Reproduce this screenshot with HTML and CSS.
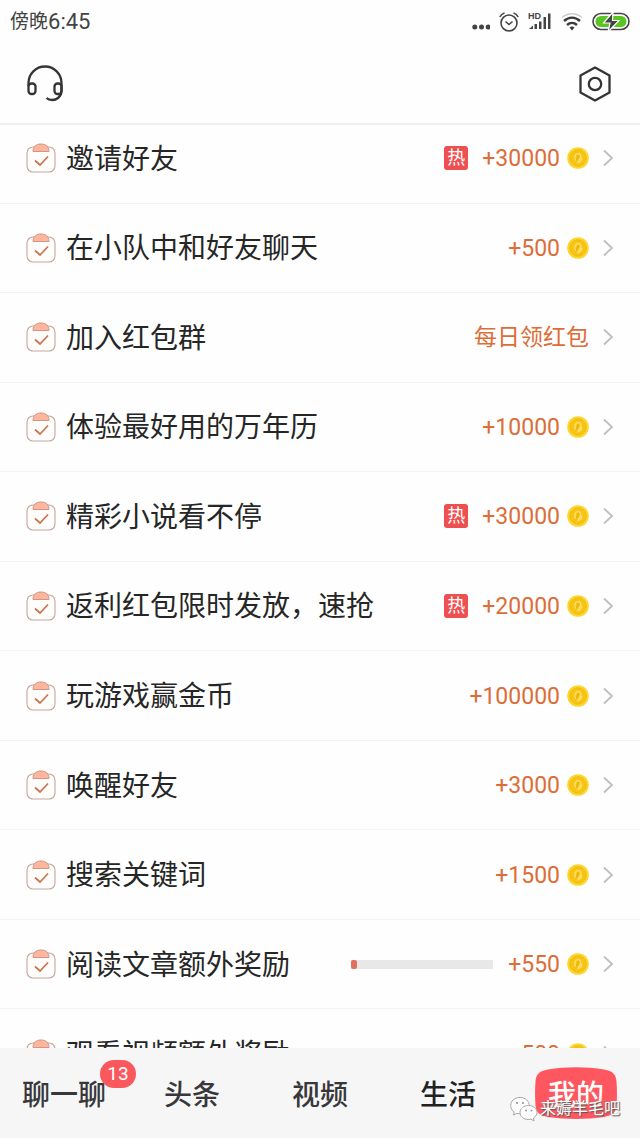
FILE: index.html
```html
<!DOCTYPE html>
<html lang="zh-CN">
<head>
<meta charset="utf-8">
<meta name="viewport" content="width=device-width, initial-scale=1">
<title>我的</title>
<link rel="stylesheet" href="styles.css">
</head>
<body>
<svg class="defs" aria-hidden="true">
  <symbol id="task" viewBox="0 0 30 30">
    <rect x="1" y="4" width="28" height="25" rx="6" fill="#fffdfb" stroke="#c3a79d" stroke-width="1.1"/>
    <path d="M7 8.500C7 3.500 10 1 15 1s8 2.500 8 7.500z" fill="#ffb69e" stroke="#cf9784" stroke-width="1"/>
    <path d="M9 17.500l5 4.500 8-8.500" fill="none" stroke="#c9744d" stroke-width="1.700"/>
  </symbol>
  <symbol id="coin" viewBox="0 0 22 22">
    <circle cx="11" cy="11" r="10.800" fill="#fbd72e"/>
    <circle cx="11" cy="11" r="8.200" fill="#f8c414" stroke="#f3b913" stroke-width="1"/>
    <path d="M8.500 13.500c-1.500-3-.500-6 2-6.800 2.800-.600 4 1.600 3 3.800l-2.500 5c2.500-.500 3.800-2.500 3.500-5" fill="none" stroke="#fce06a" stroke-width="1.400"/>
    <path d="M9.500 13l2-4.500" stroke="#eba915" stroke-width="1.200"/>
  </symbol>
  <symbol id="arrow" viewBox="0 0 12 18">
    <path d="M2 1.500l8 7.500-8 7.500" fill="none" stroke="#bebebe" stroke-width="1.800"/>
  </symbol>
</svg>
<div class="app">
  <header class="top">
    <div class="status">
      <div class="clock"><span class="period">傍晚</span><span>6:45</span></div>
      <div class="signals">
        <svg width="20" height="22" viewBox="0 0 20 22" fill="#444"><circle cx="4.800" cy="16" r="2.500"/><circle cx="11.500" cy="16" r="2.500"/><circle cx="18.200" cy="16" r="2.500"/></svg>
        <svg width="20" height="22" viewBox="0 0 20 22" fill="none" stroke="#444" stroke-width="1.600"><circle cx="10" cy="12" r="8"/><path d="M6.500 10.500l3.500 3 3.500-3M.800 6C1.800 4 3.500 2.600 5.500 2M19.200 6c-1-2-2.700-3.400-4.700-4"/></svg>
        <svg width="24" height="22" viewBox="0 0 24 22" fill="#444"><text class="hd" x="0" y="8">HD</text><path d="M1 18l4-3.500V18zM6.500 13H9v5H6.500zM11 10.500h2.500V18H11zM15.500 6H18v12h-2.500zM20 2.500h2.500V18H20z"/></svg>
        <svg width="22" height="22" viewBox="0 0 22 22" fill="none" stroke-width="2.400"><path d="M1 6.500c6-5 14-5 20 0" stroke="#ccc" stroke-width="1.600"/><path d="M3 10c5-4.500 11-4.500 16 0M6 14c3-2.800 7-2.800 10 0" stroke="#3c3c3c"/><path d="M8.500 16.500c1.500-1.300 3.500-1.300 5 0L11 19.500z" fill="#3c3c3c"/></svg>
        <svg width="38" height="22" viewBox="0 0 38 22"><rect x="1" y="2.500" width="36" height="16" rx="8" fill="#fff" stroke="#444" stroke-width="1.600"/><rect x="3.500" y="5" width="31" height="11" rx="5.500" fill="#58c522"/><path d="M21 1L11.500 12H18l-2 9L27 9.500h-6.500z" fill="#444" stroke="#fff" stroke-width="1.200"/></svg>
      </div>
    </div>
    <div class="tools">
      <button class="tool" aria-label="客服"><svg width="38" height="38" viewBox="0 0 38 38" fill="none" stroke="#343434" stroke-width="2.300"><path d="M2.500 21v-3a16.500 16.500 0 0 1 33 0v8c0 6-5.500 9-9 9-2.500 0-4.500-.500-6-2"/><rect x="2.500" y="18.500" width="7" height="10.500" rx="3"/><rect x="28.500" y="18.500" width="7" height="10.500" rx="3"/></svg></button>
      <button class="tool" aria-label="设置"><svg width="38" height="38" viewBox="0 0 38 38" fill="none" stroke="#343434" stroke-width="2.300" stroke-linejoin="round"><path d="M19 2.500l14.500 8v17L19 35.500l-14.500-8v-17z"/><circle cx="19" cy="19" r="6.200"/></svg></button>
    </div>
  </header>
  <main class="scroll">
    <ul class="tasks">
      <li><a class="task" href="#"><svg class="mark"><use href="#task"/></svg><span class="name">邀请好友</span><span class="hot">热</span><span class="prize">+30000</span><svg class="coin"><use href="#coin"/></svg><svg class="arrow"><use href="#arrow"/></svg></a></li>
      <li><a class="task" href="#"><svg class="mark"><use href="#task"/></svg><span class="name">在小队中和好友聊天</span><span class="prize">+500</span><svg class="coin"><use href="#coin"/></svg><svg class="arrow"><use href="#arrow"/></svg></a></li>
      <li><a class="task" href="#"><svg class="mark"><use href="#task"/></svg><span class="name">加入红包群</span><span class="prize">每日领红包</span><svg class="arrow"><use href="#arrow"/></svg></a></li>
      <li><a class="task" href="#"><svg class="mark"><use href="#task"/></svg><span class="name">体验最好用的万年历</span><span class="prize">+10000</span><svg class="coin"><use href="#coin"/></svg><svg class="arrow"><use href="#arrow"/></svg></a></li>
      <li><a class="task" href="#"><svg class="mark"><use href="#task"/></svg><span class="name">精彩小说看不停</span><span class="hot">热</span><span class="prize">+30000</span><svg class="coin"><use href="#coin"/></svg><svg class="arrow"><use href="#arrow"/></svg></a></li>
      <li><a class="task" href="#"><svg class="mark"><use href="#task"/></svg><span class="name">返利红包限时发放，速抢</span><span class="hot">热</span><span class="prize">+20000</span><svg class="coin"><use href="#coin"/></svg><svg class="arrow"><use href="#arrow"/></svg></a></li>
      <li><a class="task" href="#"><svg class="mark"><use href="#task"/></svg><span class="name">玩游戏赢金币</span><span class="prize">+100000</span><svg class="coin"><use href="#coin"/></svg><svg class="arrow"><use href="#arrow"/></svg></a></li>
      <li><a class="task" href="#"><svg class="mark"><use href="#task"/></svg><span class="name">唤醒好友</span><span class="prize">+3000</span><svg class="coin"><use href="#coin"/></svg><svg class="arrow"><use href="#arrow"/></svg></a></li>
      <li><a class="task" href="#"><svg class="mark"><use href="#task"/></svg><span class="name">搜索关键词</span><span class="prize">+1500</span><svg class="coin"><use href="#coin"/></svg><svg class="arrow"><use href="#arrow"/></svg></a></li>
      <li><a class="task" href="#"><svg class="mark"><use href="#task"/></svg><span class="name">阅读文章额外奖励</span><span class="bar"><span class="fill" style="width:4%"></span></span><span class="prize">+550</span><svg class="coin"><use href="#coin"/></svg><svg class="arrow"><use href="#arrow"/></svg></a></li>
      <li><a class="task" href="#"><svg class="mark"><use href="#task"/></svg><span class="name">观看视频额外奖励</span><span class="prize">+500</span><svg class="coin"><use href="#coin"/></svg><svg class="arrow"><use href="#arrow"/></svg></a></li>
    </ul>
  </main>
  <nav class="tabs">
    <a class="tab" href="#"><span class="label">聊一聊<span class="badge">13</span></span></a>
    <a class="tab" href="#">头条</a>
    <a class="tab" href="#">视频</a>
    <a class="tab dark" href="#">生活</a>
    <a class="tab" href="#" aria-current="page"><span class="current">
      <svg class="blob" viewBox="0 0 82 52" preserveAspectRatio="none" aria-hidden="true"><path d="M13 2.500C30-.500 52-.500 69 2.500c9 1.500 12 5 12.500 12 .600 8 .600 16 0 24-.500 7-4 10-12.500 11.500-17 2.500-39 2.500-56 0C4.500 48.500 1 45.500.500 38.500c-.600-8-.600-16 0-24C1 7.500 4 4 13 2.500z" fill="#ff5760"/></svg>
      <span class="on">我的</span></span></a>
  </nav>
  <div class="watermark">
    <svg width="28" height="26" viewBox="0 0 28 26" fill="#fff" stroke="#a6a6a6" stroke-width="1"><path d="M10 1.500C4.500 1.500.700 5 .700 9.500c0 2.800 1.300 5 3.500 6.500L3.500 19l3.300-1.700c5 1.500 12-1 12.500-7.300 0-5-4-8.500-9.300-8.500z"/><path d="M18.500 9.500c-5 0-8.500 3-8.500 7s3.500 7 8.500 7l2.500-.400 3 1.900-.500-3c2-1.300 3.500-3.200 3.500-5.500 0-4-3.500-7-8.500-7z"/><g fill="#999" stroke="none"><circle cx="7" cy="7" r="1.100"/><circle cx="13" cy="7" r="1.100"/><circle cx="16" cy="14.500" r="1"/><circle cx="21.500" cy="14.500" r="1"/></g></svg>
    <span>来薅羊毛吧</span>
  </div>
</div>
</body>
</html>
```
FILE: styles.css
```css
* { box-sizing: border-box; }
body {
  margin: 0;
  background: #fefefe;
  color: #262626;
  font-family: Roboto, "Noto Sans CJK SC", sans-serif;
}
a { color: inherit; text-decoration: none; }
.defs { display: none; }
.app {
  position: relative;
  display: flex;
  flex-direction: column;
  height: 100vh;
}

.top {
  flex: none;
  border-bottom: 2px solid #efeff0;
}
.status {
  display: flex;
  justify-content: space-between;
  align-items: center;
  height: 44px;
  padding: 0 10px;
  color: #444;
}
.clock {
  display: flex;
  align-items: center;
  font-size: 22px;
  line-height: 24px;
}
.period { font-size: 19px; }
.signals { display: flex; align-items: center; gap: 9px; }
.hd { font: bold 9px "Liberation Sans", sans-serif; }
.tools {
  display: flex;
  justify-content: space-between;
  align-items: center;
  height: 79px;
  padding: 0 26px;
}
.tool {
  display: flex;
  padding: 0;
  border: 0;
  background: none;
}

.scroll {
  flex: 1;
  min-height: 0;
  overflow: hidden;
}
.tasks {
  display: grid;
  grid-auto-rows: 1fr;
  height: calc(100% + 62px);
  margin: -11px 0 0;
  padding: 0;
  list-style: none;
}
.tasks li { display: grid; border-bottom: 1px solid #f5f4f5; }
.task {
  display: flex;
  align-items: center;
  padding: 0 26px;
}
.mark {
  flex: none;
  width: 30px;
  height: 30px;
  margin-right: 10px;
}
.name {
  flex: 1;
  padding-top: 3px;
  font-size: 28px;
  line-height: 40px;
  white-space: nowrap;
}
.hot {
  width: 24px;
  margin-right: 14px;
  border-radius: 3px;
  background: #ee4f50;
  color: #fff;
  font-size: 18px;
  line-height: 24px;
  text-align: center;
}
.prize {
  padding-top: 2px;
  color: #dc6d38;
  font-size: 23px;
  line-height: 32px;
}
.coin {
  flex: none;
  width: 22px;
  height: 22px;
  margin-left: 7px;
}
.arrow {
  flex: none;
  width: 12px;
  height: 18px;
  margin-left: 13px;
}
.bar {
  width: 142px;
  height: 9px;
  margin-right: 15px;
  background: #e9e8e9;
}
.fill {
  display: block;
  height: 100%;
  border-radius: 2px;
  background: #e0705f;
}

.tabs {
  flex: none;
  display: grid;
  grid-template-columns: repeat(5, 1fr);
  height: 90px;
  background: #f6f6f7;
  color: #38383a;
  font-size: 28px;
  font-weight: 500;
}
.tab {
  display: flex;
  justify-content: center;
  align-items: center;
}
.dark { color: #222; }
.label { position: relative; }
.badge {
  position: absolute;
  top: -13px;
  right: -30px;
  width: 36px;
  border-radius: 14px;
  background: #fb585d;
  color: #fff;
  font-size: 19px;
  font-weight: 400;
  line-height: 28px;
  text-align: center;
}
.current {
  position: relative;
  display: flex;
  justify-content: center;
  align-items: center;
  width: 82px;
  height: 52px;
  color: #fff;
}
.blob {
  position: absolute;
  inset: 0;
  width: 100%;
  height: 100%;
}
.on { position: relative; }

.watermark {
  position: absolute;
  right: 20px;
  bottom: 16px;
  display: flex;
  align-items: center;
  gap: 2px;
  color: #fff;
  font-size: 16px;
  line-height: 26px;
  text-shadow: 1px 1px 1px #555, 0 0 1px #777;
}
```
